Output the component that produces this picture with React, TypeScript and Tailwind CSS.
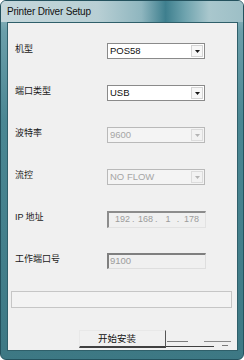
import React from 'react';

const latin = "font-['Liberation_Sans','Noto_Sans_CJK_SC',sans-serif]";
const cjk = "font-['Noto_Sans_CJK_SC','Liberation_Sans',sans-serif]";

function Arrow({ disabled }: { disabled?: boolean }) {
  return (
    <div
      className={`flex h-[12px] w-[12px] items-center justify-center border ${
        disabled ? 'border-[#dcdcdc] bg-[#f2f2f2]' : 'border-[#d4d4d4] bg-[#f7f7f7]'
      }`}
    >
      <svg width="5" height="3" viewBox="0 0 5 3">
        <path d="M0 0h5L2.5 3z" fill={disabled ? '#b4b4b4' : '#1a1a1a'} />
      </svg>
    </div>
  );
}

function Combo({ value, disabled }: { value: string; disabled?: boolean }) {
  return (
    <div
      className={`flex h-[16px] w-[98px] items-center justify-between border pl-[2px] pr-[1px] ${
        disabled
          ? 'border-[#b9b9b9] bg-[#f4f4f4] text-[#a6a6a6]'
          : 'border-[#8a8a8a] bg-white text-[#111]'
      }`}
    >
      <span className={`${latin} text-[9.5px] leading-none`}>{value}</span>
      <Arrow disabled={disabled} />
    </div>
  );
}

function Row({ label, children }: { label: React.ReactNode; children: React.ReactNode }) {
  return (
    <div className="flex h-[16px] items-start">
      <div className={`${cjk} mt-[-1px] w-[99px] pl-[7px] text-[9px] leading-[14px] text-[#1a1a1a]`}>
        {label}
      </div>
      {children}
    </div>
  );
}

export default function App() {
  return (
    <div className="h-[360px] w-[244px] bg-white">
      <div className="flex h-[360px] w-[244px] flex-col rounded-[6px] border border-[#24525e] bg-[linear-gradient(180deg,#a9c6cd_0px,#6b9faa_30px,#4a8793_120px,#3d7884_360px)] pb-[8px] pl-[6px] pr-[5px]">
        <div className="-ml-[6px] -mr-[5px] flex h-[21px] items-center rounded-t-[5px] bg-[linear-gradient(90deg,#c5d7db_0%,#b8cfd4_40%,#8fb6bf_58%,#3e7f8e_68%,#6ea3ae_76%,#a9c7cd_86%,#9dbfc6_100%)] pl-[6px]">
          <span className={`${latin} text-[10px] tracking-[-0.2px] text-[#111]`}>Printer Driver Setup</span>
        </div>
        <div className="relative flex flex-1 flex-col border border-[#2f5f6a] bg-[#f0f0f0] pt-[20px]">
          <div className="flex flex-col gap-[26px]">
            <Row label="机型">
              <Combo value="POS58" />
            </Row>
            <Row label="端口类型">
              <Combo value="USB" />
            </Row>
            <Row label="波特率">
              <Combo value="9600" disabled />
            </Row>
            <Row label="流控">
              <Combo value="NO FLOW" disabled />
            </Row>
            <Row
              label={
                <span>
                  <span className={latin}>IP</span> 地址
                </span>
              }
            >
              <div
                className={`${latin} flex h-[17px] w-[99px] items-center border-b border-l-2 border-r border-t-2 border-b-[#e2e2e2] border-l-[#8c8c8c] border-r-[#e2e2e2] border-t-[#8c8c8c] bg-[#f0f0f0] pl-[6px] text-[9px] text-[#9c9c9c]`}
              >
                <span className="w-[17px]">192</span>
                <span className="w-[6px]">.</span>
                <span className="w-[17px]">168</span>
                <span className="w-[9px]">.</span>
                <span className="w-[8px] text-center">1</span>
                <span className="w-[12px] text-center">.</span>
                <span>178</span>
              </div>
            </Row>
            <Row label="工作端口号">
              <div
                className={`${latin} flex h-[16px] w-[99px] items-center border-b border-l-2 border-r border-t-2 border-b-[#dedede] border-l-[#7f7f7f] border-r-[#dedede] border-t-[#7f7f7f] bg-[#f0f0f0] pl-[1px] text-[9.5px] text-[#9c9c9c]`}
              >
                9100
              </div>
            </Row>
          </div>
          <div className="ml-[3px] mr-[5px] mt-[22px] h-[17px] border border-[#c6c6c6] bg-[#f3f3f3]" />
          <div className="mt-[22px] flex">
            <div className="ml-[71px] flex h-[18px] w-[87px] items-center border-b-2 border-l border-r border-t border-b-[#404040] border-l-[#e8e8e8] border-r-[#555] border-t-[#e8e8e8] bg-[#f0f0f0] pl-[18px]">
              <span className={`${cjk} text-[9.5px] leading-none text-[#111]`}>开始安装</span>
            </div>
          </div>
          <div className="absolute left-[159px] top-[318px] h-[1px] w-[21px] bg-[#7a7a7a]" />
          <div className="absolute left-[196px] top-[318px] h-[1px] w-[27px] bg-[#8a8a8a]" />
          <div className="absolute left-[158px] top-[323px] h-[1px] w-[48px] bg-[#404040]" />
          <div className="absolute left-[214px] top-[322px] h-[1px] w-[6px] bg-[#7a7a7a]" />
        </div>
      </div>
    </div>
  );
}
